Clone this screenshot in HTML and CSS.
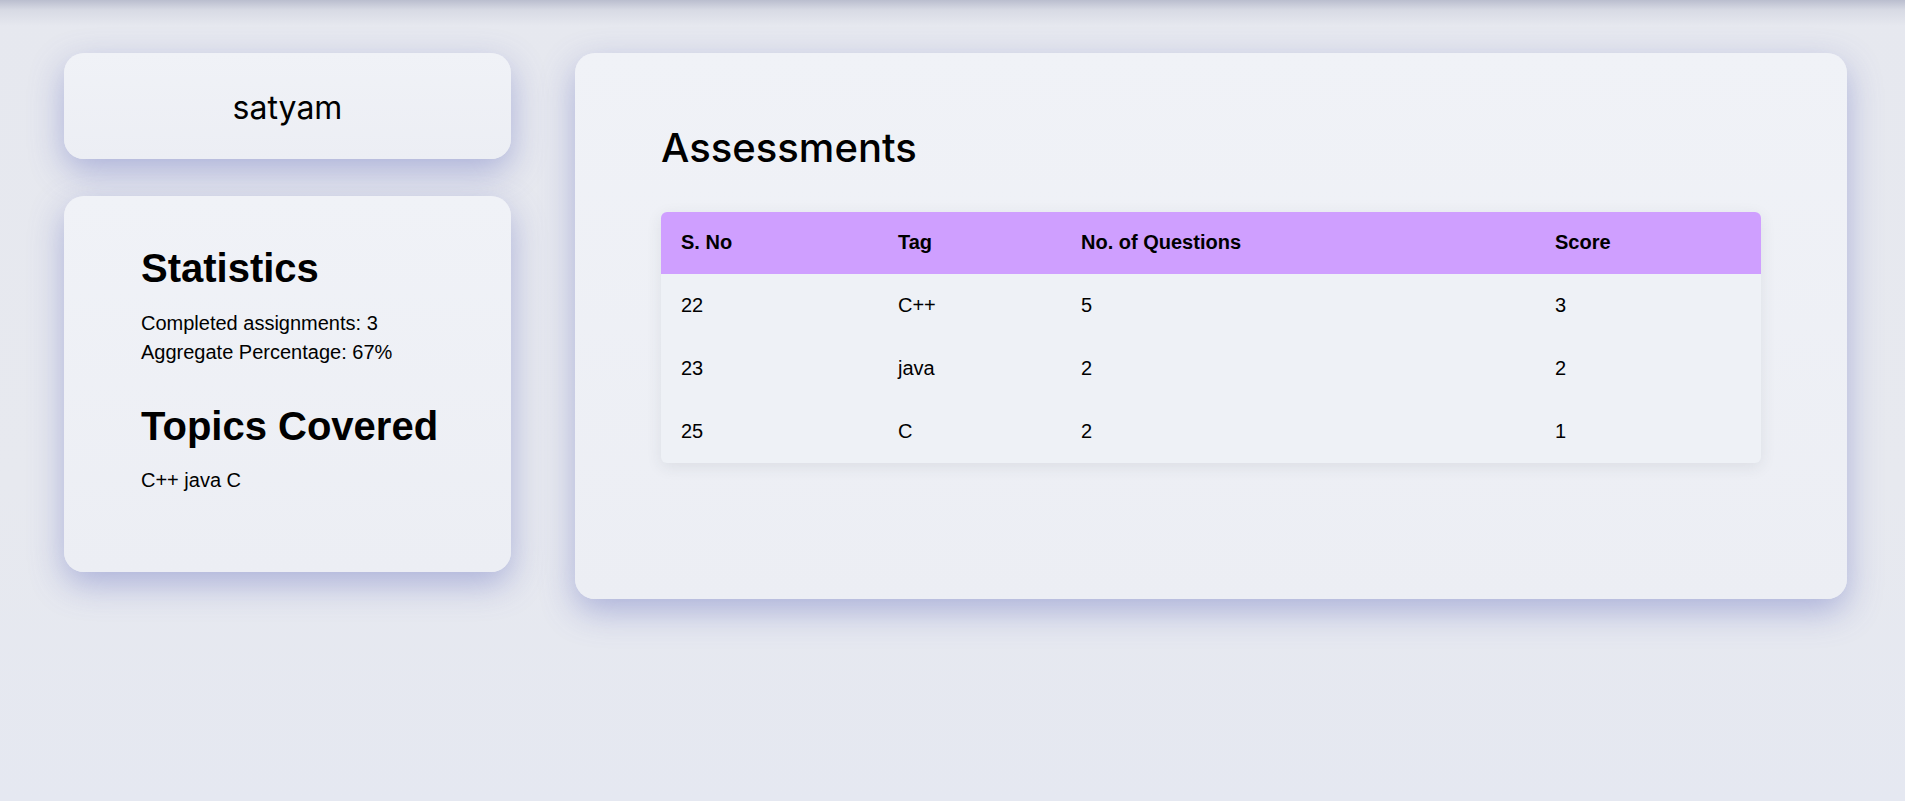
FILE: index.html
```html
<!DOCTYPE html>
<html lang="en">
<head>
<meta charset="utf-8">
<title>Profile</title>
<link rel="stylesheet" href="styles.css">
</head>
<body>
  <main class="layout">
    <aside class="sidebar">
      <div class="card name-card">satyam</div>
      <div class="card stats-card">
        <h2 class="stats-title">Statistics</h2>
        <p class="stat-line">Completed assignments: 3</p>
        <p class="stat-line">Aggregate Percentage: 67%</p>
        <h2 class="stats-title topics-title">Topics Covered</h2>
        <p class="stat-line topics-list">C++ java C</p>
      </div>
    </aside>
    <section class="card assess-card">
      <h1 class="assess-title">Assessments</h1>
      <table class="assess-table">
        <thead>
          <tr>
            <th class="col-sno">S. No</th>
            <th class="col-tag">Tag</th>
            <th class="col-q">No. of Questions</th>
            <th class="col-score">Score</th>
          </tr>
        </thead>
        <tbody>
          <tr><td>22</td><td>C++</td><td>5</td><td>3</td></tr>
          <tr><td>23</td><td>java</td><td>2</td><td>2</td></tr>
          <tr><td>25</td><td>C</td><td>2</td><td>1</td></tr>
        </tbody>
      </table>
    </section>
  </main>
</body>
</html>
```
FILE: styles.css
```css
html, body {
  margin: 0;
  padding: 0;
}

body {
  min-height: 100vh;
  font-family: "Liberation Sans", Arial, sans-serif;
  color: #000;
  background:
    linear-gradient(180deg, rgba(150, 155, 180, 0.55) 0, rgba(150, 155, 180, 0.18) 10px, rgba(150, 155, 180, 0) 26px),
    linear-gradient(180deg, #e6e8ef 0, #e7e9ef 60%, #e5e8f1 100%);
}

.layout {
  display: flex;
  align-items: flex-start;
  gap: 64px;
  padding: 53px 58px 0 64px;
}

.sidebar {
  width: 447px;
  display: flex;
  flex-direction: column;
  gap: 37px;
  flex: none;
}

.card {
  border-radius: 20px;
  background: linear-gradient(180deg, #f0f2f7 0%, #eceef4 100%);
  box-shadow: 0 12px 34px rgba(90, 100, 185, 0.42);
}

.name-card {
  height: 106px;
  display: flex;
  align-items: center;
  justify-content: center;
  font-family: Inter, "Noto Sans", sans-serif;
  font-size: 32px;
  font-weight: 400;
  padding-top: 2px;
  box-sizing: border-box;
}

.stats-card {
  height: 376px;
  box-sizing: border-box;
  padding: 49px 40px 0 77px;
}

.stats-title {
  margin: 0;
  font-size: 40px;
  line-height: 46px;
  font-weight: 700;
}

.stat-line {
  margin: 0;
  font-size: 20px;
  line-height: 29px;
}

.stats-title + .stat-line {
  margin-top: 18px;
}

.topics-title {
  margin-top: 36px;
}

.stats-title + .topics-list {
  margin-top: 17px;
}

.assess-card {
  width: 1272px;
  height: 546px;
  flex: none;
  box-sizing: border-box;
  padding: 71px 86px 0 86px;
}

.assess-title {
  margin: 0 0 40px 0;
  font-family: Inter, "Noto Sans", sans-serif;
  font-size: 40px;
  font-weight: 500;
  line-height: 48px;
}

.assess-table {
  width: 1100px;
  border-collapse: separate;
  border-spacing: 0;
  border-radius: 6px;
  overflow: hidden;
  background: #eef1f6;
  box-shadow: 0 4px 16px rgba(40, 50, 70, 0.09);
  font-size: 20px;
}

.assess-table th,
.assess-table td {
  text-align: left;
  padding: 20px 20px;
  line-height: 23px;
}

.assess-table th {
  background: #cf9fff;
  font-weight: 700;
  padding-top: 19px;
  padding-bottom: 20px;
}

.col-sno { width: 177px; }
.col-tag { width: 143px; }
.col-q { width: 434px; }
.col-score { width: 186px; }
```
